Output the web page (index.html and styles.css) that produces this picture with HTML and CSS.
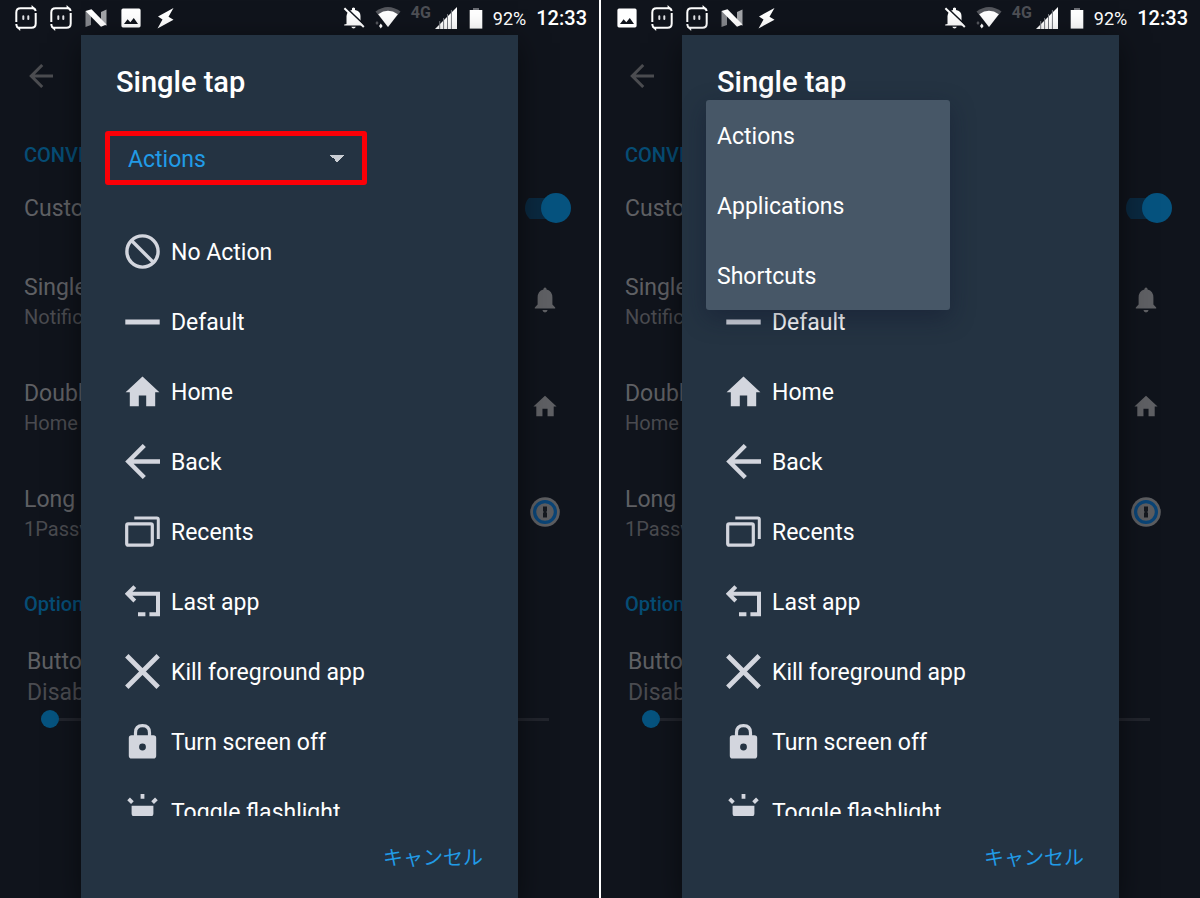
FILE: index.html
```html
<!DOCTYPE html>
<html lang="ja">
<head>
    <meta charset="UTF-8">
    <meta name="viewport" content="width=device-width, initial-scale=1.0">
    <title>Single tap</title>
    <link rel="stylesheet" href="styles.css">
</head>
<body>

    <!-- Icon sprite -->
    <svg class="sprite" aria-hidden="true">
        <symbol id="cat" viewBox="0 0 22 26">
            <path d="M1.3 17V7.5Q1.3 3.2 5.5 3.2H18M20.7 8V18.5Q20.7 22.8 16.5 22.8H4M1.3 19Q1.5 22.8 4.5 22.8M20.7 6Q20.2 3.5 17.5 3.2" fill="none" stroke="#fff" stroke-width="2"/>
            <path d="M16.6 0L20.8 4H16.6zM5.2 26L1 22H5.2z" fill="#fff"/>
            <path d="M8.3 11.2V14M13.3 11.2V14" stroke="#dfe0e4" stroke-width="2" stroke-linecap="round"/>
        </symbol>
        <symbol id="nougat" viewBox="0 0 22 26">
            <path d="M0.5 6L6 9V20L0.5 22z" fill="#85878c"/>
            <path d="M16 7L21.5 4.5V21L16 17z" fill="#a2a4a8"/>
            <path d="M0.5 6L6.5 4.3L21.5 19.5L16 21.8z" fill="#fff"/>
        </symbol>
        <symbol id="image" viewBox="0 0 22 26">
            <path fill-rule="evenodd" fill="#fff" d="M3 3.6H19Q20.6 3.6 20.6 5.2V20.8Q20.6 22.4 19 22.4H3Q1.4 22.4 1.4 20.8V5.2Q1.4 3.6 3 3.6zM4 19H18L13.8 13L10.3 17.2L7.6 14.2z"/>
        </symbol>
        <symbol id="bolt" viewBox="0 0 22 26">
            <path d="M18.5 3L3 11.5L7.5 14.5L2.5 23.5L18.5 14.8L13.5 11.8z" fill="#fff"/>
        </symbol>
        <symbol id="bell-off" viewBox="0 0 22 24">
            <path d="M3.5 18V10Q4 5 9 4V2.2Q10.5 0.8 12 2.2V4Q17.5 5.2 17.5 10V15.5L19.5 18.5V19.5H1.2V18.5zM8.3 20.8H12.8Q12.3 22.6 10.6 22.6Q8.8 22.6 8.3 20.8z" fill="#fff"/>
            <path d="M3 1.6L21.5 19.2" stroke="#10141c" stroke-width="1.8"/>
            <path d="M1.4 2.2L20.8 21" stroke="#fff" stroke-width="2"/>
        </symbol>
        <symbol id="wifi" viewBox="0 0 26 24">
            <path d="M0.5 5.5Q13 -3.5 25.5 5.5L13 21z" fill="#55575d"/>
            <path d="M3.2 8.2Q13 1.5 22.8 8.2L13 21z" fill="#fff"/>
            <path d="M0 15.5L3 13.5L8.5 16V24H0z" fill="#10141c"/>
            <path d="M2 15L3.6 17L2 19L0.4 17z" fill="#55575d"/>
            <path d="M5.8 17.6L7.6 20L5.8 22.4L4 20z" fill="#fff"/>
        </symbol>
        <symbol id="signal" viewBox="0 0 22 24">
            <path d="M0 23L22 1V23z" fill="#fff"/>
            <path d="M4.7 15V23M8.6 12V23M12.5 8V23M16.4 4V23" stroke="#777a80" stroke-width="1"/>
        </symbol>
        <symbol id="battery" viewBox="0 0 14 24">
            <path d="M4 2H10V4H4z" fill="#6b6d73"/>
            <path d="M0.7 4H13.3V22.6H0.7z" fill="#fff"/>
        </symbol>
        <symbol id="arrow" viewBox="0 0 35 35">
            <path d="M35 17.5H3M19.3 1.5L3.3 17.5L19.3 33.5" fill="none" stroke="currentColor" stroke-width="4.4"/>
        </symbol>
        <symbol id="none" viewBox="0 0 35 35">
            <circle cx="17.5" cy="17.5" r="15.6" fill="none" stroke="currentColor" stroke-width="3.4"/>
            <path d="M6.5 6.5L28.5 28.5" stroke="currentColor" stroke-width="3.4"/>
        </symbol>
        <symbol id="line" viewBox="0 0 35 35">
            <path d="M0.3 15.5H34.7V20.5H0.3z" fill="currentColor"/>
        </symbol>
        <symbol id="home" viewBox="0 0 35 35">
            <path d="M17.5 2.5L34.4 18.2H30.2V32.3H21.2V21.5H13.8V32.3H4.8V18.2H0.6z" fill="currentColor"/>
        </symbol>
        <symbol id="recents" viewBox="0 0 35 35">
            <rect x="1.7" y="9.8" width="25.6" height="21.4" rx="1.4" fill="none" stroke="currentColor" stroke-width="3.2"/>
            <path d="M9.3 4H31.8Q33.3 4 33.3 5.5V25" fill="none" stroke="currentColor" stroke-width="3"/>
        </symbol>
        <symbol id="last" viewBox="0 0 35 35">
            <path d="M2.5 9.8H33V30.3H24.4M20.4 30.3H13M9.8 2.6L2.6 9.8L9.8 17" fill="none" stroke="currentColor" stroke-width="4"/>
        </symbol>
        <symbol id="close" viewBox="0 0 35 35">
            <path d="M1.8 1.8L33.2 33.2M33.2 1.8L1.8 33.2" stroke="currentColor" stroke-width="4.8"/>
        </symbol>
        <symbol id="lock" viewBox="0 0 35 35">
            <path d="M10.5 12.5V8.7Q10.5 1.6 17.5 1.6Q24.5 1.6 24.5 8.7V12.5" fill="none" stroke="currentColor" stroke-width="3.2"/>
            <path fill-rule="evenodd" fill="currentColor" d="M6.6 11.3H28.4Q31.2 11.3 31.2 14V31.8Q31.2 34.6 28.4 34.6H6.6Q3.8 34.6 3.8 31.8V14Q3.8 11.3 6.6 11.3zM17.5 19.6A3.4 3.4 0 1 0 17.5 26.4A3.4 3.4 0 1 0 17.5 19.6z"/>
        </symbol>
        <symbol id="flash" viewBox="0 0 35 35">
            <path d="M6.6 11.8H28.4V19.5Q28.4 22.5 25.4 22.5H9.6Q6.6 22.5 6.6 19.5zM11 22H24V35H11z" fill="currentColor"/>
            <path d="M17.5 0V4.7M3.6 4.8L7.4 8.6M31.4 4.8L27.6 8.6" stroke="currentColor" stroke-width="3.8"/>
        </symbol>
        <symbol id="bell" viewBox="0 0 28 28">
            <path d="M12.4 3.4Q12.4 1.6 14 1.6Q15.6 1.6 15.6 3.4Q21.4 5 21.4 11.5V18.6L24.2 21.4V22.6H3.8V21.4L6.6 18.6V11.5Q6.6 5 12.4 3.4zM11.4 24H16.6Q16.2 26.4 14 26.4Q11.8 26.4 11.4 24z" fill="currentColor"/>
        </symbol>
        <symbol id="onepass" viewBox="0 0 30 30">
            <circle cx="15" cy="15" r="14.8" fill="#5c5d60"/>
            <circle cx="15" cy="15" r="10.4" fill="none" stroke="#0a4476" stroke-width="3.2"/>
            <path d="M13 9.5H17V14L16.2 15L17 16V20.5H13V16L13.8 15L13 14z" fill="#15191f"/>
        </symbol>
    </svg>

    <main class="phones">
        <section class="phone">
            <header class="status-bar">
                <div class="notifications">
                    <svg><use href="#cat"/></svg>
                    <svg><use href="#cat"/></svg>
                    <svg><use href="#nougat"/></svg>
                    <svg><use href="#image"/></svg>
                    <svg><use href="#bolt"/></svg>
                </div>
                <div class="system">
                    <svg class="mute"><use href="#bell-off"/></svg>
                    <svg class="wifi"><use href="#wifi"/></svg>
                    <span class="network">4G</span>
                    <svg class="signal"><use href="#signal"/></svg>
                    <svg class="battery"><use href="#battery"/></svg>
                    <span class="percent">92%</span>
                    <span class="clock">12:33</span>
                </div>
            </header>

            <div class="settings">
                <div class="app-bar"><svg><use href="#arrow"/></svg></div>
                <h2>CONVENIENCE</h2>
                <div class="toggle-row">
                    <label for="custom1">Customize</label>
                    <input class="switch" type="checkbox" id="custom1" checked>
                </div>
                <div class="setting">
                    <div><p class="name">Single tap</p><p class="value">Notifications</p></div>
                    <svg><use href="#bell"/></svg>
                </div>
                <div class="setting">
                    <div><p class="name">Double tap</p><p class="value">Home</p></div>
                    <svg class="small"><use href="#home"/></svg>
                </div>
                <div class="setting">
                    <div><p class="name">Long press</p><p class="value">1Password</p></div>
                    <svg class="round"><use href="#onepass"/></svg>
                </div>
                <h2 class="options">Options</h2>
                <div class="slider-row">
                    <label for="vibrate1">Button<span>Disabled</span></label>
                    <input class="slider" type="range" id="vibrate1" value="0">
                </div>
            </div>

            <div class="dialog">
                <h1>Single tap</h1>
                <div class="picker highlight">
                    <select aria-label="Type">
                        <option>Actions</option>
                        <option>Applications</option>
                        <option>Shortcuts</option>
                    </select>
                </div>
                <ul class="actions">
                    <li><svg><use href="#none"/></svg>No Action</li>
                    <li><svg><use href="#line"/></svg>Default</li>
                    <li><svg><use href="#home"/></svg>Home</li>
                    <li><svg><use href="#arrow"/></svg>Back</li>
                    <li><svg><use href="#recents"/></svg>Recents</li>
                    <li><svg><use href="#last"/></svg>Last app</li>
                    <li><svg><use href="#close"/></svg>Kill foreground app</li>
                    <li><svg><use href="#lock"/></svg>Turn screen off</li>
                    <li><svg><use href="#flash"/></svg>Toggle flashlight</li>
                </ul>
                <div class="buttons">
                    <button type="button">キャンセル</button>
                </div>
            </div>
        </section>

        <section class="phone">
            <header class="status-bar">
                <div class="notifications">
                    <svg><use href="#image"/></svg>
                    <svg><use href="#cat"/></svg>
                    <svg><use href="#cat"/></svg>
                    <svg><use href="#nougat"/></svg>
                    <svg><use href="#bolt"/></svg>
                </div>
                <div class="system">
                    <svg class="mute"><use href="#bell-off"/></svg>
                    <svg class="wifi"><use href="#wifi"/></svg>
                    <span class="network">4G</span>
                    <svg class="signal"><use href="#signal"/></svg>
                    <svg class="battery"><use href="#battery"/></svg>
                    <span class="percent">92%</span>
                    <span class="clock">12:33</span>
                </div>
            </header>

            <div class="settings">
                <div class="app-bar"><svg><use href="#arrow"/></svg></div>
                <h2>CONVENIENCE</h2>
                <div class="toggle-row">
                    <label for="custom2">Customize</label>
                    <input class="switch" type="checkbox" id="custom2" checked>
                </div>
                <div class="setting">
                    <div><p class="name">Single tap</p><p class="value">Notifications</p></div>
                    <svg><use href="#bell"/></svg>
                </div>
                <div class="setting">
                    <div><p class="name">Double tap</p><p class="value">Home</p></div>
                    <svg class="small"><use href="#home"/></svg>
                </div>
                <div class="setting">
                    <div><p class="name">Long press</p><p class="value">1Password</p></div>
                    <svg class="round"><use href="#onepass"/></svg>
                </div>
                <h2 class="options">Options</h2>
                <div class="slider-row">
                    <label for="vibrate2">Button<span>Disabled</span></label>
                    <input class="slider" type="range" id="vibrate2" value="0">
                </div>
            </div>

            <div class="dialog">
                <h1>Single tap</h1>
                <!-- Drop-down in its open state -->
                <div class="picker">
                    <div class="menu">
                        <button type="button">Actions</button>
                        <button type="button">Applications</button>
                        <button type="button">Shortcuts</button>
                    </div>
                </div>
                <ul class="actions">
                    <li class="covered"></li>
                    <li><svg><use href="#line"/></svg>Default</li>
                    <li><svg><use href="#home"/></svg>Home</li>
                    <li><svg><use href="#arrow"/></svg>Back</li>
                    <li><svg><use href="#recents"/></svg>Recents</li>
                    <li><svg><use href="#last"/></svg>Last app</li>
                    <li><svg><use href="#close"/></svg>Kill foreground app</li>
                    <li><svg><use href="#lock"/></svg>Turn screen off</li>
                    <li><svg><use href="#flash"/></svg>Toggle flashlight</li>
                </ul>
                <div class="buttons">
                    <button type="button">キャンセル</button>
                </div>
            </div>
        </section>
    </main>

</body>
</html>
```
FILE: styles.css
```css
* {
    box-sizing: border-box;
}
body {
    margin: 0;
    background-color: #fff;
    font-family: Roboto, "Noto Sans CJK JP", sans-serif;
}
h1, h2, p, ul {
    margin: 0;
    padding: 0;
}
button, select {
    font-family: inherit;
    border: none;
    background: none;
    cursor: pointer;
}
.sprite {
    display: none;
}
.phones {
    display: flex;
    gap: 2px;
    height: 100vh;
}
.phone {
    flex: 1;
    min-width: 0;
    position: relative;
    overflow: hidden;
    background-color: #10141c;
}

/* Status bar */
.status-bar {
    display: flex;
    justify-content: space-between;
    align-items: center;
    height: 36px;
    padding: 0 12px 0 15px;
    color: #fff;
}
.notifications {
    display: flex;
    gap: 13px;
}
.notifications svg {
    width: 22px;
    height: 26px;
}
.system {
    display: flex;
    align-items: center;
    gap: 10px;
}
.system svg {
    height: 24px;
}
.mute {
    width: 22px;
}
.wifi {
    width: 26px;
}
.network {
    align-self: flex-start;
    margin-right: -6px;
    font-size: 16px;
    font-weight: 700;
    line-height: 14px;
    color: #4d4f55;
}
.signal {
    width: 22px;
    margin-right: 2px;
}
.battery {
    width: 14px;
}
.percent {
    font-size: 18px;
}
.clock {
    font-size: 20px;
    font-weight: 500;
}

/* Settings page behind the dialog */
.settings {
    color: #5f6064;
    font-size: 23px;
    white-space: nowrap;
}
.app-bar {
    display: flex;
    align-items: center;
    height: 80px;
    padding-left: 29px;
}
.app-bar svg {
    width: 24px;
    height: 24px;
    color: #4b4c50;
}
.settings h2 {
    margin-top: 25px;
    padding-left: 24px;
    font-size: 20px;
    font-weight: 500;
    line-height: 28px;
    color: #064d75;
}
.toggle-row {
    display: flex;
    justify-content: space-between;
    align-items: center;
    height: 78px;
    padding: 0 28px 0 24px;
}
.switch {
    appearance: none;
    display: flex;
    align-items: center;
    justify-content: flex-end;
    width: 46px;
    height: 30px;
    margin: 0;
    border-radius: 15px;
    background: linear-gradient(#0a2940, #0a2940) 0 50% / 40px 21px no-repeat;
}
.switch::before {
    content: "";
    width: 30px;
    height: 30px;
    border-radius: 50%;
    background-color: #06537f;
}
.setting {
    display: flex;
    justify-content: space-between;
    align-items: center;
    height: 106px;
    padding: 0 40px 0 24px;
}
.setting div {
    padding-top: 3px;
}
.setting svg {
    width: 28px;
    height: 28px;
}
.setting .small {
    width: 24px;
    height: 24px;
    margin-right: 2px;
}
.setting .round {
    width: 30px;
    height: 30px;
    margin-right: -1px;
}
.name {
    line-height: 30px;
}
.value {
    font-size: 20px;
    line-height: 28px;
    color: #4a4b50;
}
.slider-row {
    display: flex;
    flex-direction: column;
    margin-top: 28px;
    padding: 0 50px 0 27px;
    line-height: 31px;
}
.slider-row span {
    display: block;
    color: #4a4b50;
}
.slider {
    appearance: none;
    height: 18px;
    margin: 2px 0 0 14px;
    background: linear-gradient(#22252d, #22252d) 0 50% / 100% 3px no-repeat;
}
.slider::-webkit-slider-thumb {
    appearance: none;
    width: 18px;
    height: 18px;
    border-radius: 50%;
    background-color: #06537f;
}

/* Dialog */
.dialog {
    position: absolute;
    top: 35px;
    right: 81px;
    bottom: 0;
    left: 81px;
    display: flex;
    flex-direction: column;
    padding-top: 31px;
    background-color: #243342;
    box-shadow: 0 8px 28px rgba(0, 0, 0, 0.5);
    color: #fff;
}
.dialog h1 {
    padding-left: 35px;
    font-size: 29px;
    font-weight: 500;
    line-height: 32px;
}
.picker {
    position: relative;
    flex: none;
    width: 262px;
    height: 54px;
    margin: 33px 0 31px 24px;
}
.highlight {
    border: 5px solid #fb0007; /* Red frame round the closed drop-down */
    border-radius: 3px;
}
.picker select {
    appearance: none;
    width: 100%;
    height: 100%;
    padding: 2px 18px 0;
    color: #219be6;
    font-size: 23px;
    background: conic-gradient(from -45deg at 50% 100%, #c9cdd3 90deg, transparent 0) right 18px top 19px / 14px 7px no-repeat;
}
.menu {
    position: absolute;
    top: -31px;
    left: 0;
    z-index: 1;
    display: flex;
    flex-direction: column;
    width: 244px;
    border-radius: 3px;
    background-color: #475767;
    box-shadow: 0 8px 24px rgba(16, 20, 44, 0.4);
}
.menu button {
    height: 70px;
    padding: 2px 11px 0;
    color: #fff;
    font-size: 23px;
    text-align: left;
}
.actions {
    flex: 1;
    min-height: 0;
    overflow: hidden;
    list-style: none;
}
.actions li {
    display: flex;
    align-items: center;
    gap: 11px;
    height: 70px;
    padding: 2px 0 0 44px;
    font-size: 23px;
}
.actions svg {
    width: 35px;
    height: 35px;
    margin-bottom: 2px;
    color: #d3d6de;
}
.buttons {
    display: flex;
    justify-content: flex-end;
    align-items: center;
    height: 82px;
    padding: 0 35px 2px 0;
}
.buttons button {
    padding: 0;
    color: #219be6;
    font-size: 20px;
}
```
